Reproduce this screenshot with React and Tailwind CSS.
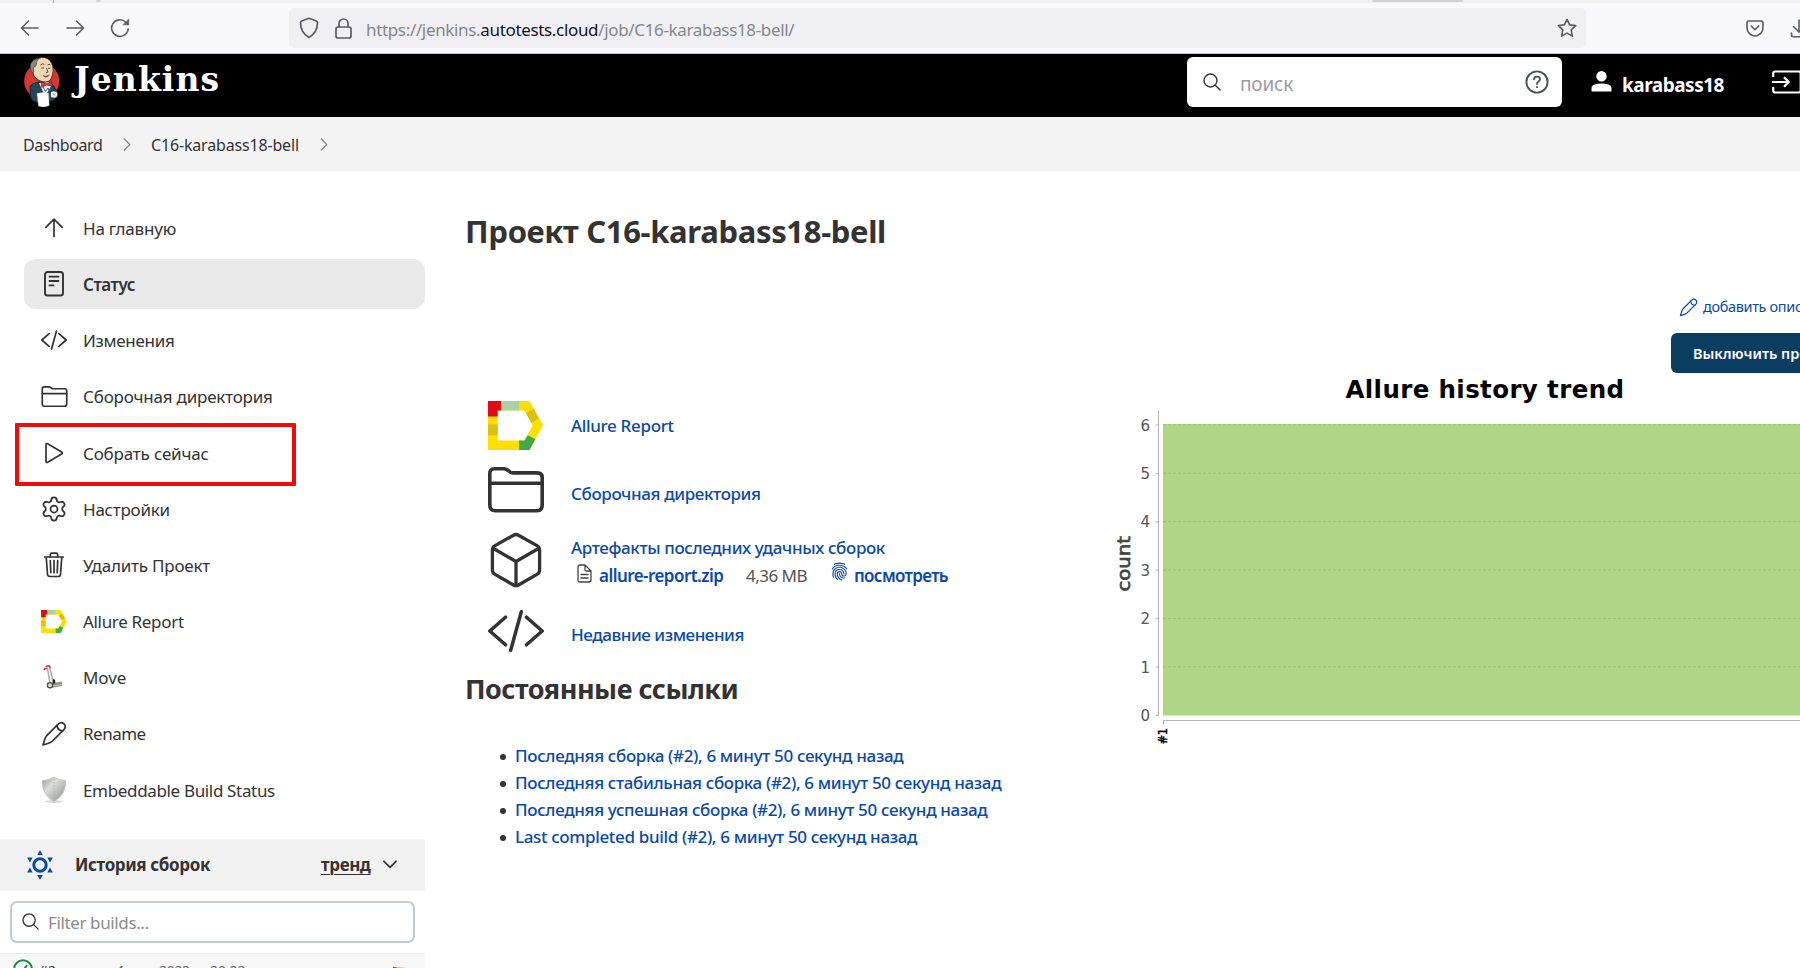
import React from "react";
import { Settings } from "lucide-react";
import { IoFingerPrint } from "react-icons/io5";

const line = {
  fill: "none",
  stroke: "currentColor",
  strokeLinecap: "round",
  strokeLinejoin: "round",
};

/* ---------- icons ---------- */

function ArrowUp() {
  return (
    <svg width="26" height="26" viewBox="0 0 26 26" {...line} strokeWidth="1.7">
      <path d="M13 21.5V4.2M4.8 12.3 13 4.2l8.2 8.1" />
    </svg>
  );
}

function StatusIcon() {
  return (
    <svg width="26" height="26" viewBox="0 0 26 26" {...line} strokeWidth="1.9">
      <rect x="4" y="1" width="18" height="23.5" rx="2.6" />
      <path d="M8.5 5.6h9M8.5 10h9M8.5 14.4h4" />
    </svg>
  );
}

function CodeIcon({ className, strokeWidth = 1.5 }) {
  return (
    <svg className={className} viewBox="0 0 56 42" {...line} strokeWidth={strokeWidth}>
      <path d="M17.5 7.2 1.8 21l15.7 13.8M38.5 7.2 54.2 21 38.5 34.8M33.3 1.8 22.7 40.2" />
    </svg>
  );
}

function FolderIcon({ className, strokeWidth }) {
  return (
    <svg className={className} viewBox="0 0 56 46" {...line} strokeWidth={strokeWidth}>
      <path d="M1.8 38V6.5q0-4.7 4.7-4.7h9.3q1.7 0 3.2 1l3 2.1q1.5 1 3.2 1h24.3q4.7 0 4.7 4.7V38q0 5.7-5.7 5.7h-41Q1.8 43.7 1.8 38z" />
      <path d="M1.8 16.2h52.4" />
    </svg>
  );
}

function PlayIcon() {
  return (
    <svg width="26" height="26" viewBox="0 0 26 26" {...line} strokeWidth="1.7">
      <path d="M5 4.8v16.4q0 1.9 1.7 1L20.6 14q1.5-1 0-2L6.7 3.8Q5 2.9 5 4.8z" />
    </svg>
  );
}

function TrashIcon() {
  return (
    <svg width="26" height="26" viewBox="0 0 26 26" {...line} strokeWidth="1.7">
      <path d="M3.7 5h18.6M5.2 5l1.3 17.3q.2 2.2 2.3 2.2h8.400q2.100 0 2.300-2.200L20.800 5" />
      <path d="M9.300 5V2.800q0-1.600 1.600-1.600h4.200q1.600 0 1.600 1.600V5M13 8.700v12M9.300 8.700l.5 12M16.700 8.700l-.5 12" />
    </svg>
  );
}

function PencilIcon({ className, strokeWidth }) {
  return (
    <svg className={className} viewBox="0 0 26 26" {...line} strokeWidth={strokeWidth}>
      <path d="M2 24 4 17.500Q4.600 15.700 6 14.300L17.400 2.900q2.900-2.600 5.600-.1 2.600 2.700.1 5.600L11.500 20q-1.400 1.400-3.200 2z" />
      <path d="M16 4.400q.4 4.900 5.600 5.600" />
    </svg>
  );
}

function AllureIcon({ className }) {
  return (
    <svg className={className} viewBox="0 0 55 49">
      <path fill="#ffdf00" fillRule="evenodd" d="M0 0h41.500L55 24.200 41.500 49H0zM9.700 9.500V39.500h27l8-15.300-8.500-14.700z" />
      <path fill="#e20a17" d="M0 0h13v9.500H9.700v6H0z" />
      <path fill="#a9d3a4" d="M13 0h18v9.500H13z" />
      <path fill="#dcc010" d="M0 23.500h9.700v10.800H0zM38 12.300l7.500-4.600L51 17.600l-7.700 4.200z" />
      <path fill="#3fab47" d="M31 39.500h5.700l2.900-5.200 7.800 3.700-5.900 11H31z" />
    </svg>
  );
}

function MoveIcon() {
  return (
    <svg width="26" height="26" viewBox="0 0 26 26" fill="none">
      <path d="m6.300 3 3.200 17M8.800 3l3.700 15" stroke="#a8a8a8" strokeWidth="1.500" />
      <path d="M2.700 4.600 4 3.600h1.800M4.700 1.800l1.500-.8h2.300l.6 2" stroke="#c4293a" strokeWidth="1.400" />
      <path d="m10.500 18.400 10.500-2v4.600l-9.500 1.800z" fill="#8f8f8a" />
      <path d="m12 14 2 .7.500 3.500-3 .6z" fill="#222" />
      <path d="m12 21 9-1.500" stroke="#c9c9c4" strokeWidth="1" />
      <circle cx="9" cy="20.300" r="2.600" fill="#ddd" stroke="#4a4a4a" strokeWidth="1.300" />
    </svg>
  );
}

function ShieldBadge() {
  return (
    <svg width="26" height="28" viewBox="0 0 26 28">
      <defs>
        <linearGradient id="shield" x1="0" y1="0" x2="1" y2="1">
          <stop offset="0" stopColor="#8f938e" />
          <stop offset=".35" stopColor="#dcdedb" />
          <stop offset="1" stopColor="#8d908b" />
        </linearGradient>
      </defs>
      <ellipse cx="13" cy="25.500" rx="9" ry="1.500" fill="#d8d8d8" />
      <path d="M13 1.200q5 3.300 11.500 3.300.7 14.300-11.500 21Q.8 18.800 1.500 4.500 8 4.500 13 1.200z" fill="url(#shield)" stroke="#c2c5c0" />
      <path d="M13 3v21" stroke="#b3b5b1" strokeDasharray="1.500 1.500" />
    </svg>
  );
}

function SunIcon() {
  return (
    <svg width="30" height="32" viewBox="-15 -16 30 32">
      <circle r="6.200" fill="none" stroke="#0b4aa6" strokeWidth="3" />
      {[0, 60, 120, 180, 240, 300].map((a) => (
        <path key={a} transform={`rotate(${a})`} d="M0-14.800-2.800-10h5.600z" fill="#0b4aa6" />
      ))}
    </svg>
  );
}

function SearchIcon({ className }) {
  return (
    <svg className={className} viewBox="0 0 18 18" {...line} strokeWidth="1.400">
      <circle cx="7.500" cy="7.500" r="6.500" />
      <path d="m12.300 12.300 4.800 4.800" />
    </svg>
  );
}

function Chevron() {
  return (
    <svg width="8" height="13" viewBox="0 0 8 13" {...line} strokeWidth="1.300">
      <path d="m1.300 1 5.500 5.500L1.300 12" />
    </svg>
  );
}

function CubeIcon() {
  return (
    <svg width="56" height="56" viewBox="0 0 56 56" {...line} strokeWidth="3.300">
      <path d="M30.500 3.200 49 13.600q2.600 1.500 2.600 4.400v20q0 2.900-2.600 4.400L30.500 53q-2.500 1.400-5 0L7 42.400Q4.400 40.900 4.400 38V18q0-2.900 2.600-4.400L25.500 3.200q2.500-1.400 5 0z" />
      <path d="M5.500 16.500 28 29.500l22.500-13M28 29.500v24" />
    </svg>
  );
}

function DocIcon() {
  return (
    <svg width="15" height="19" viewBox="0 0 15 19" {...line} strokeWidth="1.300">
      <path d="M1 3q0-2 2-2h5l6 6v9q0 2-2 2H3q-2 0-2-2zM8 1v4.500Q8 7 9.500 7H14M4 10.500h7M4 14h7" />
    </svg>
  );
}

function JenkinsHead() {
  return (
    <svg width="38" height="51" viewBox="-1 0 38 51">
      <circle cx="17.800" cy="24" r="17.600" fill="#d33833" />
      <path d="M6 29q3-3 8-4l14 2 5 7 .3 6-5 4-15 1.500q-6-1-6.800-6z" fill="#24465d" stroke="#0d1a24" strokeWidth=".8" />
      <path d="m15 26 6 13 7-11-3-3z" fill="#e9ecec" />
      <path d="M8 12Q7 4 14 1.500q7-3 12 2 4.500 6 2.500 14-1.500 7.500-7 7.500-7.500 0-12-7z" fill="#f0d6b7" stroke="#2a211c" strokeWidth=".8" />
      <path d="M8.500 16Q5 12 6.500 7 9 1.500 15 1.200q-3 3-2.800 7l-1 1.500q-2.500-.5-1.500 5z" fill="#8b8683" stroke="#2a211c" strokeWidth=".6" />
      <path d="M16.500 8q2-2 4-.6M23.500 8q1.500-1.200 3-.2M17.500 11h2.500M24 11.300h2.300M22.500 11l1.500 4-2 .8" fill="none" stroke="#3a2d25" strokeWidth=".8" />
      <path d="M18.500 17.800q4 2 7-.5-1 3.500-4 3.300-2.500-.5-3-2.800z" fill="#8d5a44" />
      <path d="m17 24.500 5.500 2.200 5-2.200.5 5-5.300-1.600-5 2.600z" fill="#d33833" stroke="#5b1512" strokeWidth=".5" />
      <path d="m19 30 2.500 4.500L24 31l1.500 3 1.500-4" fill="none" stroke="#39617c" strokeWidth="1" />
      <path d="M13 36.500q6-1.500 11.500-.5l.7 12.500q-5 2.500-10.700.5z" fill="#fff" stroke="#bbb" strokeWidth=".4" />
      <path d="M26.500 35q3-2 6.500-.2l.8 3-1.500 3q-4 .8-5.800-1z" fill="#f5f0ea" stroke="#2a211c" strokeWidth=".6" />
      <path d="m29 36.500 2 2" stroke="#2a211c" strokeWidth=".6" />
    </svg>
  );
}

/* ---------- page parts ---------- */

function BrowserBar() {
  return (
    <div className="flex h-[54px] shrink-0 flex-col border-b border-[#c4c4c8] bg-[#f9f9fb]">
      <div className="flex h-[3px] shrink-0 bg-[#f0f0f0]">
        <i className="ml-[53px] h-[3px] w-px bg-[#aaa]" />
        <i className="ml-[42px] h-[2px] w-[5px] rounded-b-full bg-[#cfcfcf]" />
        <i className="ml-[1271px] h-[2px] w-[91px] rounded-b-full bg-[#d2d2d4]" />
      </div>
      <div className="flex flex-1 items-center text-[#5b5b66]">
        <svg className="ml-[20px] shrink-0" width="20" height="18" viewBox="0 0 20 18" {...line} strokeWidth="1.600">
          <path d="M18 9H2M8.500 2 1.500 9l7 7" />
        </svg>
        <svg className="ml-[25px] shrink-0" width="20" height="18" viewBox="0 0 20 18" {...line} strokeWidth="1.600">
          <path d="M2 9h16M11.500 2l7 7-7 7" />
        </svg>
        <svg className="ml-[25px] shrink-0" width="20" height="20" viewBox="0 0 20 20" {...line} strokeWidth="1.600">
          <path d="M18.200 11a8.300 8.300 0 1 1-2.400-6.800L18 6.300" />
          <path d="M18.800 1.200v5.600h-5.600z" fill="currentColor" strokeWidth=".6" />
        </svg>
        <div className="ml-[159px] flex h-[40px] w-[1297px] shrink-0 items-center rounded-[5px] bg-[#f0f0f4]">
          <svg className="ml-[10px] shrink-0" width="20" height="22" viewBox="0 0 20 22" {...line} strokeWidth="1.700">
            <path d="M10 1.300 17.300 4q1.200.5 1.200 1.800-.2 10.200-8.500 14.600Q1.700 16 1.500 5.800 1.500 4.500 2.700 4z" />
          </svg>
          <svg className="ml-[16px] shrink-0" width="17" height="21" viewBox="0 0 17 21" {...line} strokeWidth="1.700">
            <rect x="1" y="9" width="15" height="11" rx="2" />
            <path d="M4 9V5.500a4.500 4.500 0 0 1 9 0V9" />
          </svg>
          <span className="ml-[14px] flex-1 whitespace-nowrap pt-[3px] text-[17px] leading-6 tracking-[-0.34px] text-[#85858c]">
            https://jenkins.<span className="text-[#15141a]">autotests.cloud</span>/job/C16-karabass18-bell/
          </span>
          <svg className="mr-[9px] shrink-0" width="20" height="20" viewBox="0 0 20 20" {...line} strokeWidth="1.600">
            <path d="m10 1.300 2.600 5.600 6.100.7-4.500 4.200 1.200 6.300-5.400-3-5.400 3 1.200-6.300L1.300 7.600l6.100-.7z" />
          </svg>
        </div>
        <svg className="ml-[160px] shrink-0" width="18" height="17" viewBox="0 0 18 17" {...line} strokeWidth="1.600">
          <path d="M2.500 1h13Q17 1 17 2.500v5q0 5-4.500 7.500-3.500 2-7 0Q1 12.500 1 7.500v-5Q1 1 2.500 1zM5.200 6 9 9.800 12.800 6" />
        </svg>
        <svg className="ml-[26px] shrink-0" width="18" height="19" viewBox="0 0 18 19" {...line} strokeWidth="1.600">
          <path d="M9 1v11M3.500 7.500 9 13l5.500-5.500M1.500 14v2q0 1.700 1.700 1.700h11.600q1.700 0 1.700-1.700v-2" />
        </svg>
      </div>
    </div>
  );
}

function Header() {
  return (
    <header className="flex h-[63px] shrink-0 bg-black text-white">
      <div className="ml-[23px] mt-[3px] shrink-0">
        <JenkinsHead />
      </div>
      <span className="ml-[13px] mt-[7px] w-[160px] shrink-0 font-['DejaVu_Serif'] text-[33px] font-bold leading-[38px] tracking-[1.1px]">Jenkins</span>
      <div className="ml-[953px] mt-[3px] flex h-[50px] w-[375px] shrink-0 items-center rounded-[6px] bg-white text-[#333]">
        <SearchIcon className="ml-[16px] size-[18px] shrink-0" />
        <span className="ml-[19px] flex-1 pt-[3px] text-[19px] leading-6 tracking-[-0.21px] text-[#9a9da0]">поиск</span>
        <svg className="mr-[13px] shrink-0" width="24" height="24" viewBox="0 0 24 24" {...line} stroke="#4d545d" strokeWidth="1.900">
          <circle cx="12" cy="12" r="10.600" />
          <path d="M9 9.300q.2-2.700 3-2.700t3 2.600q0 1.500-1.700 2.500-1.300.8-1.300 2.200M12 17v.3" />
        </svg>
      </div>
      <svg className="ml-[29px] mt-[17px] shrink-0" width="21" height="21" viewBox="0 0 21 21" fill="#fff">
        <circle cx="10.500" cy="5.300" r="5.200" />
        <path d="M.5 20.500v-3.200q0-2.700 3-3.700 7-2.400 14 0 3 1 3 3.700v3.200z" />
      </svg>
      <span className="ml-[10px] mt-[19px] w-[103px] shrink-0 text-[19px] font-bold leading-6 tracking-[-0.49px]">karabass18</span>
      <svg className="ml-[47px] mt-[16px] shrink-0" width="30" height="24" viewBox="0 0 30 24" fill="none" stroke="#fff" strokeWidth="2.200">
        <path d="M1.200 7V3.500Q1.200 1.500 3.200 1.500h23.500q2 0 2 2v17q0 2-2 2H3.200q-2 0-2-2V17M0 12h15.500M12 7.300l4.700 4.700-4.700 4.700" />
      </svg>
    </header>
  );
}

const menu = [
  { label: "На главную", icon: <ArrowUp />, track: "tracking-[-0.21px]" },
  { label: "Статус", icon: <StatusIcon />, active: true, track: "tracking-[-0.47px]" },
  { label: "Изменения", icon: <CodeIcon className="h-[20px] w-[26px]" strokeWidth={3.7} />, track: "tracking-[-0.3px]" },
  { label: "Сборочная директория", icon: <FolderIcon className="h-[21.5px] w-[27px] shrink-0" strokeWidth={3.6} />, track: "tracking-[-0.2px]" },
  { label: "Собрать сейчас", icon: <PlayIcon />, marked: true, track: "tracking-[-0.18px]" },
  { label: "Настройки", icon: <Settings size={28} strokeWidth={1.5} className="shrink-0" />, track: "tracking-[-0.23px]" },
  { label: "Удалить Проект", icon: <TrashIcon />, track: "tracking-[-0.2px]" },
  { label: "Allure Report", icon: <AllureIcon className="h-[23px] w-[26px]" />, track: "tracking-[-0.32px]" },
  { label: "Move", icon: <MoveIcon />, track: "tracking-[-0.1px]" },
  { label: "Rename", icon: <PencilIcon className="size-[26px]" strokeWidth={1.7} />, track: "tracking-[-0.5px]" },
  { label: "Embeddable Build Status", icon: <ShieldBadge />, track: "tracking-[-0.34px]" },
];

function Sidebar() {
  return (
    <aside className="flex w-[425px] shrink-0 flex-col">
      <nav className="ml-[24px] mt-[32px] flex flex-col gap-[6.2px]">
        {menu.map((m) => (
          <a
            key={m.label}
            className={`relative flex h-[50px] shrink-0 items-center gap-4 rounded-xl pl-[17px] text-[17px] ${m.track} ${
              m.active ? "bg-[#e9e9e9] font-semibold" : ""
            }`}
          >
            <span className="flex w-[26px] justify-center">{m.icon}</span>
            <span className="pt-px">{m.label}</span>
            {m.marked && <span className="absolute left-[-9px] top-[-5px] h-[63px] w-[281px] rounded-[1px] border-4 border-[#f00a0a]" />}
          </a>
        ))}
      </nav>

      <div className="mt-[24px] flex h-[52px] shrink-0 items-center bg-[#f1f1f1] text-[17px] font-bold">
        <span className="ml-[25px]">
          <SunIcon />
        </span>
        <span className="ml-[20px] w-[246px] tracking-[-0.37px]">История сборок</span>
        <span className="w-[50px] tracking-[-0.36px] underline decoration-1 underline-offset-[3px]">тренд</span>
        <svg className="ml-[12px]" width="14" height="9" viewBox="0 0 14 9" {...line} strokeWidth="1.800">
          <path d="m1 1.300 6 6 6-6" />
        </svg>
      </div>

      <div className="mx-[10px] mt-[10px] flex h-[42px] shrink-0 items-center rounded-[7px] border-2 border-[#c3c9ce]">
        <SearchIcon className="ml-[10px] size-[17px]" />
        <span className="ml-[9px] pt-px text-[17px] tracking-[-0.38px] text-[#8b8b8b]">Filter builds...</span>
      </div>

      <div className="mt-[10px] flex h-[40px] shrink-0 border-t border-[#ececec] bg-[#f8f8f8] text-[14px] leading-6">
        <svg className="ml-[13px] mt-[5px]" width="20" height="20" viewBox="0 0 20 20" {...line} stroke="#1e8a3c" strokeWidth="2">
          <circle cx="10" cy="10" r="8.800" />
          <path d="m6.500 10.500 2.500 2.500 4.500-6.200" />
        </svg>
        <span className="ml-[6px] mt-[5px] w-[77px]">#2</span>
        <span className="mt-[5px] w-[43px] tracking-[-0.1px] text-[#666]">4 авг.</span>
        <span className="mt-[5px] w-[51px] tracking-[-0.3px] text-[#666]">2023 г.,</span>
        <span className="mt-[5px] w-[183px] tracking-[-0.1px] text-[#666]">20:22</span>
        <AllureIcon className="mt-[13px] h-[14px] w-[15px]" />
      </div>
    </aside>
  );
}

function LinkRow({ icon, className, children }) {
  return (
    <div className={`flex items-center text-[17px] font-medium text-[#0b4aa6] ${className}`}>
      <span className="ml-[23px] mr-[27px] flex w-[56px] justify-center text-[#333]">{icon}</span>
      {children}
    </div>
  );
}

const permalinks = [
  "Последняя сборка (#2), 6 минут 50 секунд назад",
  "Последняя стабильная сборка (#2), 6 минут 50 секунд назад",
  "Последняя успешная сборка (#2), 6 минут 50 секунд назад",
  "Last completed build (#2), 6 минут 50 секунд назад",
];

const yTicks = [6, 5, 4, 3, 2, 1, 0];

function TrendChart() {
  return (
    <svg width="700" height="400" viewBox="0 0 700 400" className="block" fontFamily="DejaVu Sans">
      <text x="245.500" y="24.500" fontSize="24.500" fontWeight="700" textLength="278.500">
        Allure history trend
      </text>
      <rect x="63" y="51" width="637" height="291.500" fill="#aed684" />
      <path d="M58.500 38v305M63 347.500h637M63.500 348v3.500" stroke="#b5b5b5" fill="none" />
      {yTicks.map((n, i) => (
        <g key={n}>
          <path d={`M55.500 ${(52 + i * 48.4).toFixed(1)}h3`} stroke="#b5b5b5" />
          {n > 0 && <path d={`M63 ${(51.8 + i * 48.4).toFixed(1)}h637`} stroke="#9cc274" strokeDasharray="3 2" />}
          <text x="50" y={(57.5 + i * 48.4).toFixed(1)} fontSize="15" fill="#555" textAnchor="end">
            {n}
          </text>
        </g>
      ))}
      <text
        transform="translate(30 218.500) rotate(-90)"
        fontSize="18"
        fill="#444"
        stroke="#444"
        strokeWidth=".7"
        textLength="55.500"
        lengthAdjust="spacingAndGlyphs"
      >
        count
      </text>
      <text transform="translate(67 371.500) rotate(-90)" fontSize="11.500" fill="#000" stroke="#000" strokeWidth=".4" textLength="16.500">
        #1
      </text>
    </svg>
  );
}

export default function App() {
  return (
    <div className="flex h-[968px] w-[1800px] flex-col overflow-hidden bg-white font-['Noto_Sans',sans-serif] text-[#333]">
      <BrowserBar />
      <Header />
      <div className="flex h-[54px] shrink-0 items-center bg-[#f3f3f3] text-[16px]">
        <span className="ml-[23px] w-[100px] pt-[2px] tracking-[-0.38px]">Dashboard</span>
        <span className="w-[28px] text-[#888]"><Chevron /></span>
        <span className="w-[169px] pt-[2px] tracking-[-0.17px]">C16-karabass18-bell</span>
        <span className="text-[#888]"><Chevron /></span>
      </div>

      <div className="flex min-h-0 flex-1">
        <Sidebar />
        <main className="flex flex-1 flex-col pl-[40px] pt-[40px]">
          <h1 className="h-[40px] whitespace-nowrap text-[31px] font-bold leading-[40px] tracking-[-0.33px]">Проект C16-karabass18-bell</h1>
          <div className="flex">
            <section className="w-[635px] shrink-0 pt-[144px]">
              <LinkRow className="h-[60px] tracking-[-0.34px]" icon={<AllureIcon className="mr-[1px] h-[49px] w-[55px] shrink-0" />}>
                <span className="pt-px">Allure Report</span>
              </LinkRow>
              <LinkRow className="h-[69px] tracking-[-0.37px]" icon={<FolderIcon className="h-[46px] w-[56px]" strokeWidth={3.6} />}>
                <span className="pt-[9px]">Сборочная директория</span>
              </LinkRow>
              <LinkRow className="h-[72px] tracking-[-0.36px]" icon={<CubeIcon />}>
                <div className="flex flex-col whitespace-nowrap pt-[3px] leading-[28px]">
                  <span>Артефакты последних удачных сборок</span>
                  <div className="flex font-semibold">
                    <span className="ml-[6px] mt-[2px] w-[22px] text-[#444]"><DocIcon /></span>
                    <span className="w-[147px] tracking-[-0.55px]">allure-report.zip</span>
                    <span className="w-[84px] font-normal tracking-[-0.52px] text-[#555]">4,36 MB</span>
                    <IoFingerPrint size={19} />
                    <span className="ml-[5px] tracking-[-0.65px]">посмотреть</span>
                  </div>
                </div>
              </LinkRow>
              <LinkRow className="h-[70px] tracking-[-0.46px]" icon={<CodeIcon className="h-[42px] w-[56px]" strokeWidth={3.5} />}>
                <span className="pt-[7px]">Недавние изменения</span>
              </LinkRow>
              <h2 className="mt-[5px] text-[27px] font-bold leading-[36px] tracking-[-0.5px]">Постоянные ссылки</h2>
              <ul className="mt-[35px] text-[17px] font-medium leading-[27px] tracking-[-0.35px] text-[#0b4aa6]">
                {permalinks.map((p) => (
                  <li key={p} className="flex items-center whitespace-nowrap">
                    <i className="ml-[35px] mr-[9px] mt-[3px] size-[6px] rounded-full bg-[#333]" />
                    {p}
                  </li>
                ))}
              </ul>
            </section>

            <section className="flex w-[700px] shrink-0 flex-col items-start">
              <a className="ml-[579px] mt-[46px] flex h-[20px] items-center gap-[5px] whitespace-nowrap text-[14.5px] tracking-[-0.35px] text-[#0b4aa6]">
                <PencilIcon className="size-[19px]" strokeWidth={1.7} />
                добавить описание
              </a>
              <button className="ml-[571px] mt-[16px] h-[40px] w-[180px] shrink-0 whitespace-nowrap rounded-[6px] bg-[#0b3d61] pl-[22px] pt-px text-left text-[14.5px] font-semibold tracking-[-0.02px] text-white">
                Выключить проект
              </button>
              <TrendChart />
            </section>
          </div>
        </main>
      </div>
    </div>
  );
}
